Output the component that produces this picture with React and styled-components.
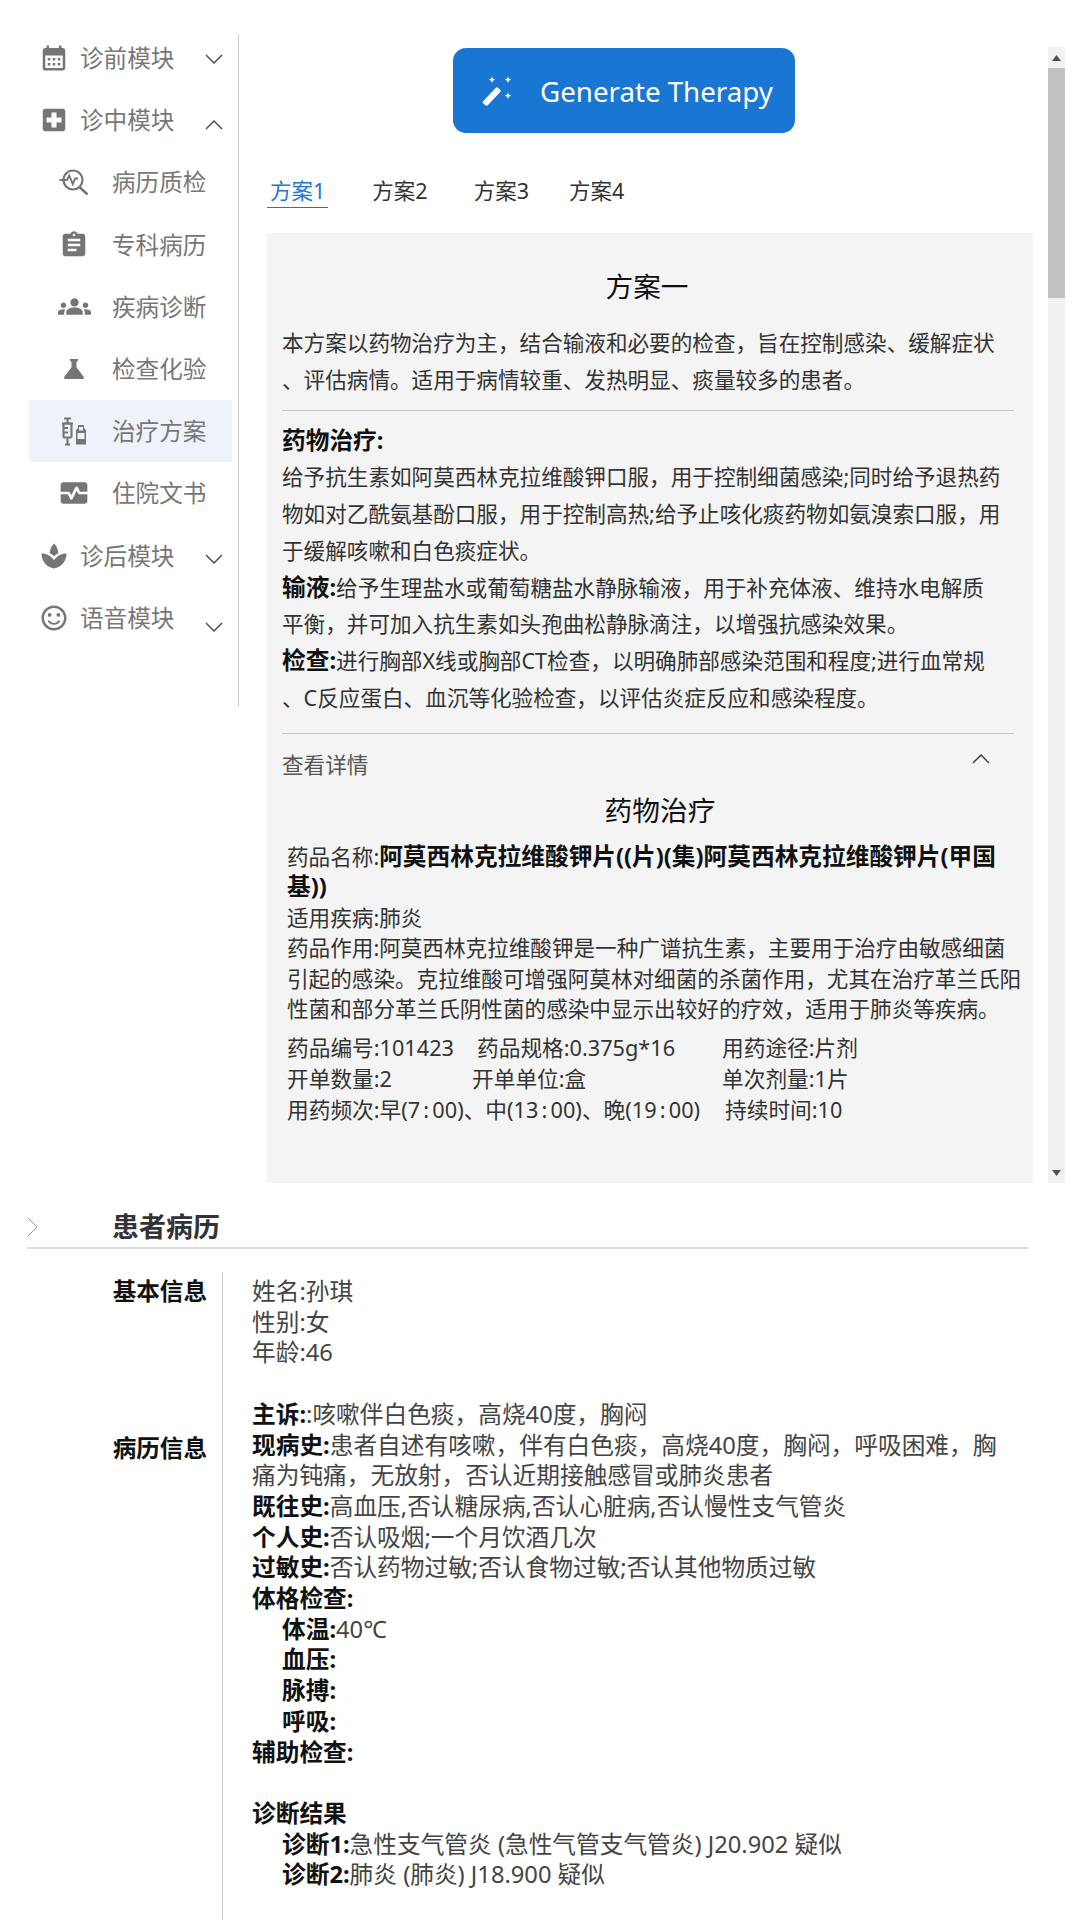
import React from "react";
import styled, { createGlobalStyle } from "styled-components";
import {
  MdCalendarMonth, MdLocalHospital, MdAssignment, MdGroups, MdScience,
  MdMonitorHeart, MdSpa, MdOutlineSentimentSatisfiedAlt,
} from "react-icons/md";

const FONT = `"Noto Sans", "Noto Sans CJK SC", sans-serif`;

const Global = createGlobalStyle`
  html, body { margin: 0; padding: 0; background: #fff; }
  body { font-family: ${FONT}; color: #333; width: 1080px; height: 1920px; overflow: hidden; }
  svg { display: block; flex: none; }
`;

const Page = styled.div`
  width: 1080px; height: 1920px; display: flex; flex-direction: column; overflow: hidden;
`;
const Top = styled.div`
  display: flex; height: 1183px; flex: none;
`;
const Sidebar = styled.nav`
  width: 203px; height: 672px; margin-top: 34px; padding: 0 6px 0 29px; box-sizing: content-box;
  border-right: 1px solid #ccc; flex: none;
`;
const MenuList = styled.div`
  margin-top: -7px; display: flex; flex-direction: column;
`;
const MenuRow = styled.div`
  height: 62.2px; display: flex; align-items: center; position: relative;
  padding-left: ${(p) => (p.$sub ? "32px" : "12px")};
  background: ${(p) => (p.$active ? "#eef3f9" : "transparent")};
  color: #777; font-size: 23.6px;
`;
const IconSlot = styled.span`
  width: 26px; height: 30px; display: flex; align-items: center; justify-content: center; flex: none;
  margin-right: ${(p) => (p.$sub ? "25px" : "13px")};
  color: #757575;
`;
const MenuText = styled.span`flex: none; line-height: 32px; white-space: nowrap;`;
const Caret = styled.span`
  position: absolute; left: 176px; top: 50%; width: 18px; height: 10px; display: block;
  margin-top: ${(p) => p.$offset}px; color: #444;
`;
const Main = styled.main`
  flex: none; width: 841px; padding: 48px 15px 0 28px; box-sizing: border-box; display: flex; gap: 15px;
`;
const Content = styled.div`width: 766px; flex: none; display: flex; flex-direction: column;`;
const GenButton = styled.button`
  width: 342px; height: 85px; margin-left: 186px; border: 0; border-radius: 13px; background: #1976d2;
  color: #fff; font-family: ${FONT}; font-size: 27.7px; display: flex; align-items: center; padding: 0 0 0 28px;
  gap: 29px; flex: none;
`;
const Tabs = styled.div`
  display: flex; margin-top: 39px; height: 36px; flex: none;
`;
const Tab = styled.div`
  font-size: 21.5px; line-height: 38px; height: 35px; padding: 0 ${(p) => (p.$active ? "3px" : "0")};
  margin-right: ${(p) => p.$gap}px; white-space: nowrap;
  color: ${(p) => (p.$active ? "#1976d2" : "#333")};
  border-bottom: ${(p) => (p.$active ? "1px solid #1976d2" : "1px solid transparent")};
`;
const Panel = styled.section`
  margin-top: 25px; flex: 1; background: #f4f4f4; padding: 35px 19px 0 15px; overflow: hidden; min-height: 0;
`;
const PanelTitle = styled.h2`
  margin: 0; padding-right: 2px; font-size: 27.7px; font-weight: 400; line-height: 36px; text-align: center; color: #111;
`;
const Para = styled.p`
  margin: ${(p) => p.$top || 0}px 0 0; font-size: 21.6px; line-height: 36.75px; color: #333;
`;
const Strong = styled.b`font-size: 23.7px; line-height: 1; font-weight: 700; color: #111;`;
const Rule = styled.hr`
  border: 0; height: 1px; background: #c4c4c4; margin: ${(p) => p.$m};
`;
const DetailHead = styled.div`
  height: 44px; margin-top: 8px; display: flex; align-items: center; justify-content: space-between;
  padding-right: 24px; font-size: 21.6px; color: #555;
`;
const UpChevron = styled.span`display: block; width: 18px; height: 10px; color: #333; margin-top: -10px;`;
const DetailTitle = styled(PanelTitle)`margin-top: 6px; padding: 0 0 0 24px;`;
const Drug = styled.div`
  padding: 14px 0 0 5px; margin-right: -10px; font-size: 21.6px; line-height: 30.6px; color: #333;
`;
const Stats = styled.div`
  margin-top: 7px; padding-left: 5px; font-size: 21.7px; line-height: 31px; color: #333;
`;
const StatRow = styled.div`display: flex; white-space: nowrap;`;
const Stat = styled.span`flex: none; width: ${(p) => p.$w}px;`;
const TimeColon = styled.span`margin: 0 3.2px;`;
const Scrollbar = styled.div`
  width: 17px; flex: none; background: #f1f1f1; margin-top: -1px; display: flex; flex-direction: column;
  height: 1136px; align-items: stretch;
`;
const ScrollBtn = styled.div`
  height: 21px; flex: none; display: flex; align-items: center; justify-content: center;
`;
const Thumb = styled.div`height: 230px; flex: none; background: #c1c1c1;`;
const Spacer = styled.div`flex: 1;`;

const Record = styled.section`
  flex: 1; min-height: 0; width: 1001px; margin-left: 27px; display: flex; flex-direction: column;
`;
const RecordHead = styled.header`
  height: 66px; padding-top: 24px; box-sizing: border-box; display: flex; align-items: center;
  border-bottom: 2px solid #ddd; flex: none;
`;
const RecordChevron = styled.span`display: block; width: 85px; color: #999; flex: none; height: 24px;`;
const RecordTitle = styled.h3`margin: 0; font-size: 27px; font-weight: 700; line-height: 36px; color: #333;`;
const RecordGrid = styled.div`
  flex: 1; margin-top: 24px; display: grid; grid-template-columns: 195px 1fr; grid-template-rows: auto 1fr;
`;
const Label = styled.div`
  text-align: right; padding: 3px 15px 0 0; font-size: 23.6px; font-weight: 700; line-height: 30.7px; color: #111;
`;
const Lines = styled.div`
  border-left: 1px solid #ccc; padding: ${(p) => (p.$first ? "3px" : "0")} 0 0 29px;
  font-size: 23.7px; line-height: 30.7px; color: #444;
`;
const Line = styled.div`
  min-height: 30.7px; padding-left: ${(p) => (p.$indent ? "30px" : "0")};
`;
const B = styled.b`font-weight: 700; color: #111;`;

const Chevron = ({ up, right }) => (
  <svg width="100%" height="100%" viewBox={right ? "0 0 10 24" : "0 0 18 10"} fill="none" stroke="currentColor"
    strokeWidth={right ? 1 : 1.3} preserveAspectRatio="xMinYMid meet">
    {right ? <path d="M1 3l9 9-9 9" /> : up ? <path d="M1 9l8-8 8 8" /> : <path d="M1 1l8 8 8-8" />}
  </svg>
);

const Wand = () => (
  <svg width="30" height="30" viewBox="0 0 30 30" fill="#fff">
    <path d="M2 25.5L14.5 12a2 2 0 0 1 2.5-.3l2 1.7a2 2 0 0 1 .2 2.6L7 29a2 2 0 0 1-2.7.1l-2-1.5a1.6 1.6 0 0 1-.3-2.1z" />
    <path d="M11 0.5l1 2.2 2.2 1-2.2 1-1 2.2-1-2.2-2.2-1 2.2-1z" />
    <path d="M27 0.5l1 2.2 2.2 1-2.2 1-1 2.2-1-2.2-2.2-1 2.2-1z" />
    <path d="M27 16.5l1 2.2 2.2 1-2.2 1-1 2.2-1-2.2-2.2-1 2.2-1z" />
  </svg>
);

const SearchPulse = () => (
  <svg width="30" height="28" viewBox="0 0 30 28" fill="none" stroke="currentColor" strokeWidth="2.2">
    <circle cx="14" cy="12" r="9.5" />
    <path d="M20.5 19l8 7.5" strokeWidth="2.4" />
    <path d="M0.5 12h7.5l2.2-4.5 3.6 8.5 2.4-5.5H19" strokeWidth="1.9" />
  </svg>
);
const Vials = () => (
  <svg width="26" height="29" viewBox="0 0 26 29" fill="none" stroke="currentColor" strokeWidth="2.1">
    <path d="M3 1.5h7M6.5 1.5v4M1 6.5h11" />
    <rect x="2.5" y="6.5" width="8" height="14" rx="1" />
    <path d="M3 11h4M3 15.5h4M6.5 20.5v6.5M4 27.5h5" />
    <path d="M17 8h6v3l2 2v14.5h-10V13l2-2z" fill="currentColor" stroke="none" />
    <rect x="16.5" y="16" width="7" height="6" fill="#eef3f9" stroke="none" />
    <rect x="18" y="10" width="4" height="3.5" fill="#eef3f9" stroke="none" />
  </svg>
);

const Arrow = ({ dir }) => (
  <svg width="9" height="6" viewBox="0 0 9 6" fill="#505050">
    {dir === "up" ? <path d="M4.5 0L9 6H0z" /> : <path d="M4.5 6L0 0h9z" />}
  </svg>
);

const menu = [
  { icon: <MdCalendarMonth size={30} />, text: "诊前模块", chev: "down", off: -4 },
  { icon: <MdLocalHospital size={30} />, text: "诊中模块", chev: "up", off: 0 },
  { icon: <SearchPulse />, text: "病历质检", sub: true },
  { icon: <MdAssignment size={30} />, text: "专科病历", sub: true },
  { icon: <MdGroups size={33} />, text: "疾病诊断", sub: true },
  { icon: <MdScience size={30} />, text: "检查化验", sub: true },
  { icon: <Vials />, text: "治疗方案", sub: true, active: true },
  { icon: <MdMonitorHeart size={32} />, text: "住院文书", sub: true },
  { icon: <MdSpa size={30} />, text: "诊后模块", chev: "down", off: -2 },
  { icon: <MdOutlineSentimentSatisfiedAlt size={30} />, text: "语音模块", chev: "down", off: 4 },
];

export default function App() {
  return (
    <>
      <Global />
      <Page>
        <Top>
          <Sidebar>
            <MenuList>
              {menu.map((m) => (
                <MenuRow key={m.text} $sub={m.sub} $active={m.active}>
                  <IconSlot $sub={m.sub}>{m.icon}</IconSlot>
                  <MenuText>{m.text}</MenuText>
                  {m.chev && <Caret $offset={m.off}><Chevron up={m.chev === "up"} /></Caret>}
                </MenuRow>
              ))}
            </MenuList>
          </Sidebar>
          <Main>
            <Content>
              <GenButton>
                <Wand />
                Generate Therapy
              </GenButton>
              <Tabs>
                <Tab $active $gap={44}>方案1</Tab>
                <Tab $gap={46}>方案2</Tab>
                <Tab $gap={40}>方案3</Tab>
                <Tab $gap={0}>方案4</Tab>
              </Tabs>
              <Panel>
                <PanelTitle>方案一</PanelTitle>
                <Para $top={21}>本方案以药物治疗为主，结合输液和必要的检查，旨在控制感染、缓解症状<br />、评估病情。适用于病情较重、发热明显、痰量较多的患者。</Para>
                <Rule $m="11px 0 0" />
                <Para $top={12}>
                  <Strong>药物治疗:</Strong><br />
                  给予抗生素如阿莫西林克拉维酸钾口服，用于控制细菌感染;同时给予退热药<br />
                  物如对乙酰氨基酚口服，用于控制高热;给予止咳化痰药物如氨溴索口服，用<br />
                  于缓解咳嗽和白色痰症状。<br />
                  <Strong>输液:</Strong>给予生理盐水或葡萄糖盐水静脉输液，用于补充体液、维持水电解质<br />
                  平衡，并可加入抗生素如头孢曲松静脉滴注，以增强抗感染效果。<br />
                  <Strong>检查:</Strong>进行胸部X线或胸部CT检查，以明确肺部感染范围和程度;进行血常规<br />
                  、C反应蛋白、血沉等化验检查，以评估炎症反应和感染程度。
                </Para>
                <Rule $m="16px 0 0" />
                <DetailHead>
                  <span>查看详情</span>
                  <UpChevron><Chevron up /></UpChevron>
                </DetailHead>
                <DetailTitle>药物治疗</DetailTitle>
                <Drug>
                  药品名称:<Strong>阿莫西林克拉维酸钾片((片)(集)阿莫西林克拉维酸钾片(甲国<br />基))</Strong><br />
                  适用疾病:肺炎<br />
                  药品作用:阿莫西林克拉维酸钾是一种广谱抗生素，主要用于治疗由敏感细菌<br />
                  引起的感染。克拉维酸可增强阿莫林对细菌的杀菌作用，尤其在治疗革兰氏阳<br />
                  性菌和部分革兰氏阴性菌的感染中显示出较好的疗效，适用于肺炎等疾病。
                </Drug>
                <Stats>
                  <StatRow><Stat $w={190}>药品编号:101423</Stat><Stat $w={245}>药品规格:0.375g*16</Stat><Stat $w={200}>用药途径:片剂</Stat></StatRow>
                  <StatRow><Stat $w={185}>开单数量:2</Stat><Stat $w={250}>开单单位:盒</Stat><Stat $w={200}>单次剂量:1片</Stat></StatRow>
                  <StatRow>
                    <Stat $w={438}>用药频次:早(7<TimeColon>:</TimeColon>00)、中(13<TimeColon>:</TimeColon>00)、晚(19<TimeColon>:</TimeColon>00)</Stat>
                    <Stat $w={200}>持续时间:10</Stat>
                  </StatRow>
                </Stats>
              </Panel>
            </Content>
            <Scrollbar>
              <ScrollBtn><Arrow dir="up" /></ScrollBtn>
              <Thumb />
              <Spacer />
              <ScrollBtn><Arrow dir="down" /></ScrollBtn>
            </Scrollbar>
          </Main>
        </Top>
        <Record>
          <RecordHead>
            <RecordChevron><Chevron right /></RecordChevron>
            <RecordTitle>患者病历</RecordTitle>
          </RecordHead>
          <RecordGrid>
            <Label>基本信息</Label>
            <Lines $first>
              <Line>姓名:孙琪</Line>
              <Line>性别:女</Line>
              <Line>年龄:46</Line>
              <Line />
              <Line><B>主诉:</B>:咳嗽伴白色痰，高烧40度，胸闷</Line>
            </Lines>
            <Label>病历信息</Label>
            <Lines>
              <Line><B>现病史:</B>患者自述有咳嗽，伴有白色痰，高烧40度，胸闷，呼吸困难，胸<br />痛为钝痛，无放射，否认近期接触感冒或肺炎患者</Line>
              <Line><B>既往史:</B>高血压,否认糖尿病,否认心脏病,否认慢性支气管炎</Line>
              <Line><B>个人史:</B>否认吸烟;一个月饮酒几次</Line>
              <Line><B>过敏史:</B>否认药物过敏;否认食物过敏;否认其他物质过敏</Line>
              <Line><B>体格检查:</B></Line>
              <Line $indent><B>体温:</B>40℃</Line>
              <Line $indent><B>血压:</B></Line>
              <Line $indent><B>脉搏:</B></Line>
              <Line $indent><B>呼吸:</B></Line>
              <Line><B>辅助检查:</B></Line>
              <Line />
              <Line><B>诊断结果</B></Line>
              <Line $indent><B>诊断1:</B>急性支气管炎 (急性气管支气管炎) J20.902 疑似</Line>
              <Line $indent><B>诊断2:</B>肺炎 (肺炎) J18.900 疑似</Line>
            </Lines>
          </RecordGrid>
        </Record>
      </Page>
    </>
  );
}
